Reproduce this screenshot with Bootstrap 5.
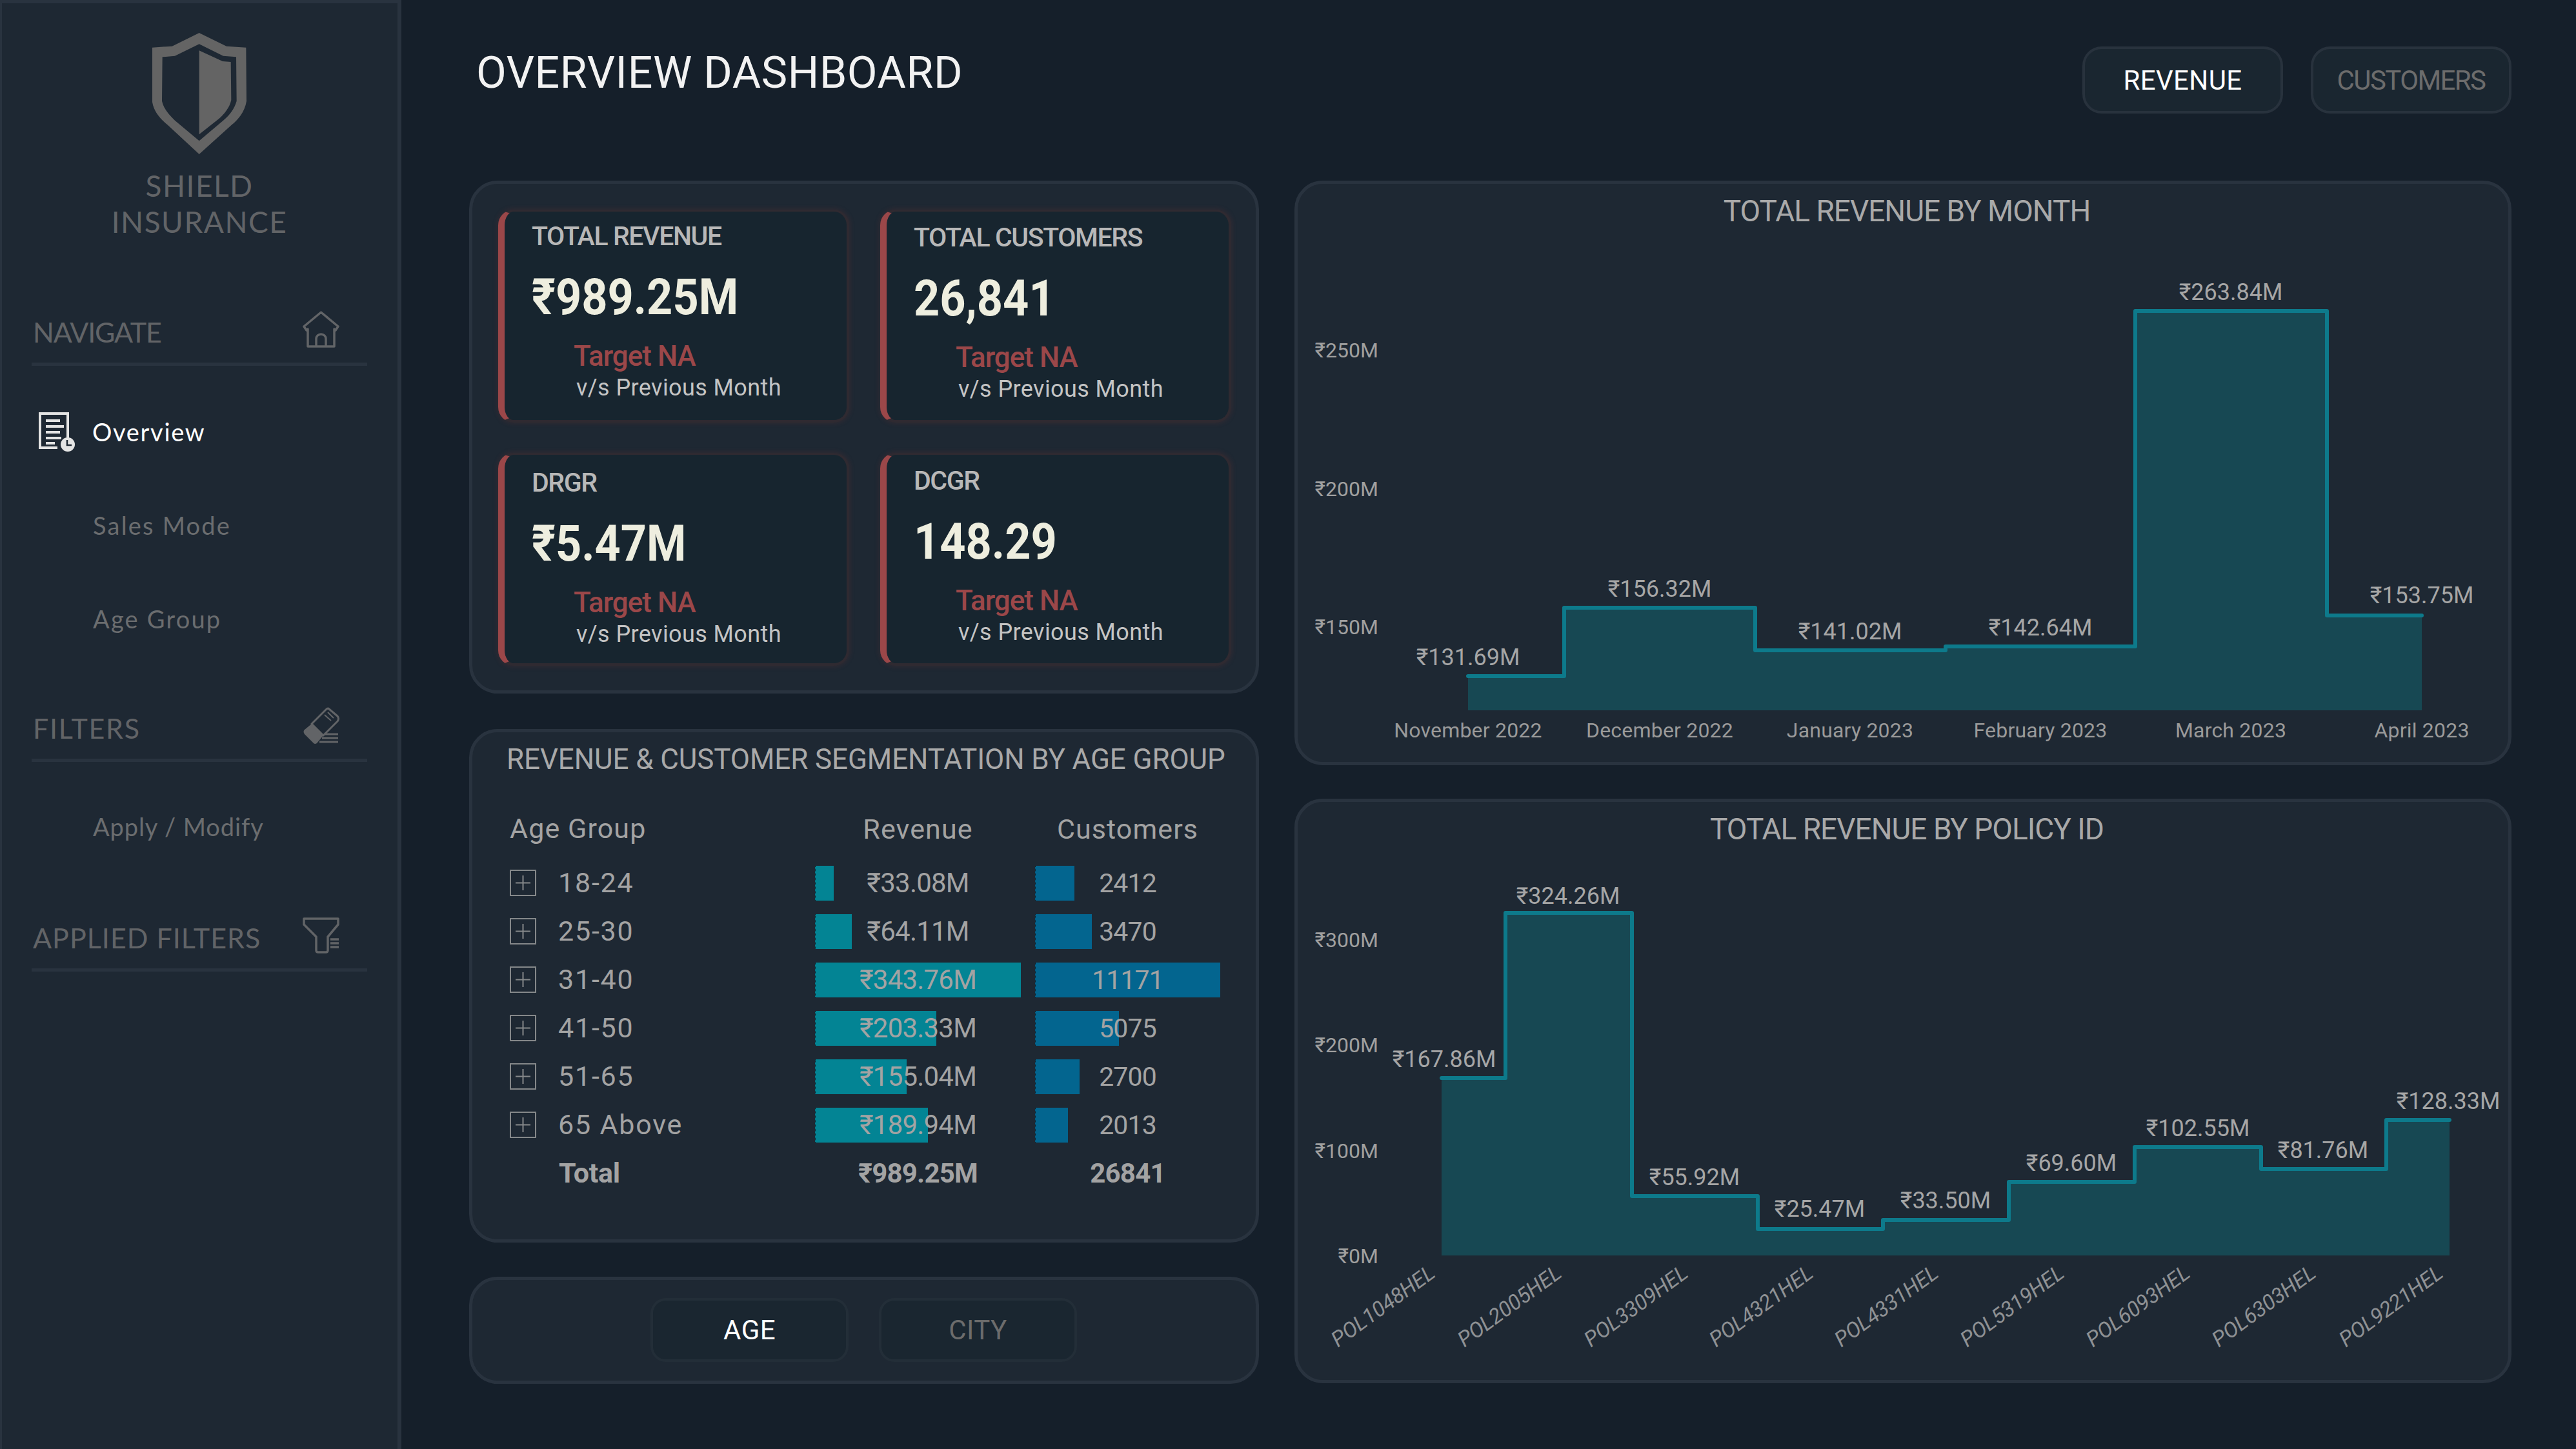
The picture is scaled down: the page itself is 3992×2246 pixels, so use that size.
<!DOCTYPE html>
<html lang="en">
<head>
<meta charset="utf-8">
<title>Overview Dashboard</title>
<link href="https://cdn.jsdelivr.net/npm/bootstrap@5.3.0/dist/css/bootstrap.min.css" rel="stylesheet">
<style>
html,body{width:3992px;height:2246px;overflow:hidden}
body{background:#151f2a;font-family:Roboto,"Noto Sans",sans-serif;color:#a9a9a9}
.shell{width:3992px;height:2246px}
.side{width:622px;height:2246px;flex:none;background:#1e2833;border-style:solid;border-color:#29333f;border-width:5px 6px 0 3px;padding-left:46px;font-family:Lato,"Open Sans",sans-serif;color:#626467}
.logo{width:520px}
.shield{width:146px;height:188px;margin-top:46px}
.brand{margin-top:21px;font-size:46px;line-height:56px;letter-spacing:1.5px;text-align:center;color:#626467}
.side-head{height:85px;border-bottom:5px solid #29333f;padding:0 43px 0 2px;align-items:flex-start}
.side-head span{font-size:43px;line-height:58px;margin-top:4px;letter-spacing:1px}
.head-nav span{letter-spacing:-1.2px}
.head-fil span{letter-spacing:1.7px}
.head-nav{margin-top:110px}.head-fil{margin-top:64px}.head-app{margin-top:67px}
.side-head svg{width:57px;height:58px}
.side-row{height:145px;padding-left:95px;font-size:38px;letter-spacing:2.2px;color:#6b6d6f}
.rows-a{margin-top:30px}.rows-b{margin-top:28px}
.rows-b .side-row{letter-spacing:.9px}
.side-row.on{color:#fff;padding-left:10px;gap:27px;letter-spacing:1.7px}
.side-row svg{width:57px;height:62px}
.main-area{padding:0 100px 0 105px;flex:1 1 auto}
.top-bar{height:280px;align-items:flex-start}
.page-title{font-size:68px;line-height:80px;margin:73px 0 0 11px;color:#f2f2f2;font-weight:400;letter-spacing:.6px}
.switches{margin-top:72px;gap:43px}
.tab-pill{width:311px;height:104px;border:4px solid #28323d;border-radius:30px;background:#1a2630;color:#6c6c6c;font-size:42px;letter-spacing:.4px}
.tab-pill.on{color:#fff}
.tab-narrow{letter-spacing:-1.6px}
.tab-small{width:307px;height:99px;border-radius:24px;border-color:#232e38}
.columns{gap:55px}
.left-col{width:1224px;flex:none}
.right-col{width:1886px;flex:none}
.panel-box{background:#1e2833;border:5px solid #29333f;border-radius:44px}
.kpi-panel{height:795px;padding:40px;display:grid;grid-template-columns:544px 544px;column-gap:48px;row-gap:47px;margin-bottom:55px}
.kpi-tile{height:330px;background:#17252f;border-style:solid;border-color:#2f2a31;border-width:3px 4px 4px 10px;border-left-color:#9b4749;border-radius:24px;box-shadow:0 0 7px 2px rgba(110,50,50,.22);padding:13px 0 0 42px}
.kpi-low{padding-top:18px}
.kpi-mid{padding-top:15px}
.kpi-name{font-size:41px;line-height:50px;font-weight:500;color:#b8b8b8;letter-spacing:-1.4px}
.kpi-num{font-weight:700;font-size:78px;line-height:90px;margin-top:25px;color:#eeeedf;transform:scaleX(.9);transform-origin:left center}
.kpi-tgt{font-size:44px;line-height:50px;font-weight:500;color:#9b4749;margin:21px 0 0 65px;letter-spacing:-1px}
.kpi-sub{font-size:36px;line-height:44px;color:#c4c4c4;margin:2px 0 0 69px;letter-spacing:.4px}
.seg-panel{height:796px;margin-bottom:53px;padding:0 0 0 58px}
.seg-title{font-size:44px;line-height:84px;margin-left:-5px;color:#a9a9a9;letter-spacing:-.1px;white-space:nowrap}
.seg-row{display:grid;grid-template-columns:473px 319px 22px 287px;height:75px;align-items:center;font-size:43px;letter-spacing:1.8px;color:#a3a3a3}
.seg-head{margin:28px 0 9px;height:75px;letter-spacing:1.1px}
.seg-total{font-weight:700}
.seg-name{display:flex;align-items:center}
.seg-name svg{width:41px;height:41px;margin-right:34px;flex:none}
.seg-gap{padding-left:76px;letter-spacing:-.3px}
.seg-cell{height:54px;line-height:54px;text-align:center;position:relative;white-space:nowrap}
.seg-row:not(.seg-head) .seg-cell{font-size:42px;letter-spacing:-.8px}
.seg-row:not(.seg-head) .fill-b{font-size:41px;letter-spacing:-.9px}
.seg-cell i{position:absolute;left:0;top:0;bottom:0;border-left:1px dotted #10202a}
.seg-cell b{position:relative;font-weight:inherit}
.fill-t i{background:#038494}.fill-b i{background:#03658f}
.toggle-panel{height:166px;gap:47px;padding:28px 0 0 276px;align-items:flex-start}
.chart-panel{height:906px}
.chart-panel + .chart-panel{margin-top:52px}
.chart-title{height:85px;line-height:84px;text-align:center;font-size:46px;color:#a9a9a9;letter-spacing:-1px;padding-left:12px}
.chart-svg{display:block;width:1876px;height:811px;overflow:visible}
.chart-svg .lv{font-size:36px;fill:#a6a6a6;text-anchor:middle}
.chart-svg .ay{font-size:32px;fill:#a0a0a0;text-anchor:end}
.chart-svg .ax{font-size:32px;fill:#9a9a9a;text-anchor:middle;letter-spacing:.2px}
.chart-svg .ar{font-size:33px;fill:#8e9194;text-anchor:end;font-style:italic;letter-spacing:-.1px}
.chart-svg .area{fill:#174853}
.chart-svg .line{fill:none;stroke:#0d7a8b;stroke-width:6;stroke-linejoin:round;stroke-linecap:round}
</style>
</head>
<body>
<div class="shell d-flex">
  <aside class="side">
    <div class="logo d-flex flex-column align-items-center">
      <svg class="shield d-block" viewBox="170 63 438 564" fill="#646464" aria-label="Shield logo">
        <path fill-rule="evenodd" d="M388 63 515 125 606 131 608 380C600 430 570 465 540 490L388 627 240 490C205 460 178 430 170 385L170 131 262 125ZM388 115 275 170 217 175 215 380C225 420 250 445 275 470L388 565 500 470C530 445 552 415 562 380L560 175 500 170Z"/>
        <path d="M388 145 497 195 535 198 537 375C530 410 505 440 480 462L388 535Z"/>
      </svg>
      <div class="brand">SHIELD<br>INSURANCE</div>
    </div>
    <div class="logo">
      <div class="side-head head-nav d-flex justify-content-between">
        <span>NAVIGATE</span>
        <svg viewBox="0 0 57 58" fill="none" stroke="#626467" stroke-width="3.500" stroke-linejoin="round"><path d="M2 24 28.500 2 55 24 51 30 49 28V55H8V28L6 30Z"/><path d="M21 55V43a7.500 7 0 0 1 15 0V55"/></svg>
      </div>
      <div class="rows-a">
        <div class="side-row on d-flex align-items-center">
          <svg viewBox="0 0 57 62" fill="none" stroke="#e4e4e4"><path stroke-width="4" d="M46 45V2H3V55H30"/><path stroke-width="4" d="M12 13H34M12 22H40M12 31H34M12 40H36M12 48H26" /><circle cx="46" cy="50" r="11" fill="#e4e4e4" stroke="none"/><path stroke="#1e2833" stroke-width="2.500" d="M45 43V51H52"/></svg>
          <span>Overview</span>
        </div>
        <div class="side-row d-flex align-items-center">Sales Mode</div>
        <div class="side-row d-flex align-items-center">Age Group</div>
      </div>
      <div class="side-head head-fil d-flex justify-content-between">
        <span>FILTERS</span>
        <svg viewBox="0 0 57 58" fill="none" stroke="#626467" stroke-width="3"><path stroke-linejoin="round" d="M41 3 54 14Q57 18 54 22L32 44 14 26 36 4Q39 1 41 3Z"/><path fill="#626467" stroke="none" d="M14 26 32 44 22 56Q19 58 17 56L3 42Q0 38 3 35Z"/><path d="M35 42H55M30 48H55M26 54H55"/><path stroke-width="2" d="M34 12 44 21M39 8 48 17"/></svg>
      </div>
      <div class="rows-b">
        <div class="side-row d-flex align-items-center">Apply / Modify</div>
      </div>
      <div class="side-head head-app d-flex justify-content-between">
        <span>APPLIED FILTERS</span>
        <svg viewBox="0 0 57 58" fill="none" stroke="#626467" stroke-width="3.500" stroke-linejoin="round"><path d="M2 3H55V12L39 31V52Q39 55 36 55H24Q21 55 21 52V31L2 12Z"/><path stroke-width="3.500" d="M43 35H56M43 41H56M43 47H56"/></svg>
      </div>
    </div>
  </aside>

  <main class="main-area">
    <div class="top-bar d-flex justify-content-between">
      <h1 class="page-title">OVERVIEW DASHBOARD</h1>
      <div class="switches d-flex">
        <div class="tab-pill on d-flex align-items-center justify-content-center">REVENUE</div>
        <div class="tab-pill tab-narrow d-flex align-items-center justify-content-center">CUSTOMERS</div>
      </div>
    </div>
    <div class="columns d-flex">
      <div class="left-col">
        <section class="panel-box kpi-panel">
          <div class="kpi-tile"><div class="kpi-name">TOTAL REVENUE</div><div class="kpi-num">₹989.25M</div><div class="kpi-tgt">Target NA</div><div class="kpi-sub">v/s Previous Month</div></div>
          <div class="kpi-tile kpi-mid"><div class="kpi-name">TOTAL CUSTOMERS</div><div class="kpi-num">26,841</div><div class="kpi-tgt">Target NA</div><div class="kpi-sub">v/s Previous Month</div></div>
          <div class="kpi-tile kpi-low"><div class="kpi-name">DRGR</div><div class="kpi-num">₹5.47M</div><div class="kpi-tgt">Target NA</div><div class="kpi-sub">v/s Previous Month</div></div>
          <div class="kpi-tile kpi-mid"><div class="kpi-name">DCGR</div><div class="kpi-num">148.29</div><div class="kpi-tgt">Target NA</div><div class="kpi-sub">v/s Previous Month</div></div>
        </section>
        <section class="panel-box seg-panel">
          <div class="seg-title">REVENUE &amp; CUSTOMER SEGMENTATION BY AGE GROUP</div>
          <div class="seg-row seg-head"><div>Age Group</div><div class="seg-cell">Revenue</div><div></div><div class="seg-cell">Customers</div></div>
          <div class="seg-row"><div class="seg-name"><svg viewBox="0 0 41 41" fill="none" stroke="#85888a" stroke-width="2"><rect x="1" y="1" width="39" height="39"/><path d="M20.500 9V32M9 20.500H32"/></svg>18-24</div><div class="seg-cell fill-t"><i style="width:29px"></i><b>₹33.08M</b></div><div></div><div class="seg-cell fill-b"><i style="width:61px"></i><b>2412</b></div></div>
          <div class="seg-row"><div class="seg-name"><svg viewBox="0 0 41 41" fill="none" stroke="#85888a" stroke-width="2"><rect x="1" y="1" width="39" height="39"/><path d="M20.500 9V32M9 20.500H32"/></svg>25-30</div><div class="seg-cell fill-t"><i style="width:57px"></i><b>₹64.11M</b></div><div></div><div class="seg-cell fill-b"><i style="width:88px"></i><b>3470</b></div></div>
          <div class="seg-row"><div class="seg-name"><svg viewBox="0 0 41 41" fill="none" stroke="#85888a" stroke-width="2"><rect x="1" y="1" width="39" height="39"/><path d="M20.500 9V32M9 20.500H32"/></svg>31-40</div><div class="seg-cell fill-t"><i style="width:319px"></i><b>₹343.76M</b></div><div></div><div class="seg-cell fill-b"><i style="width:287px"></i><b>11171</b></div></div>
          <div class="seg-row"><div class="seg-name"><svg viewBox="0 0 41 41" fill="none" stroke="#85888a" stroke-width="2"><rect x="1" y="1" width="39" height="39"/><path d="M20.500 9V32M9 20.500H32"/></svg>41-50</div><div class="seg-cell fill-t"><i style="width:188px"></i><b>₹203.33M</b></div><div></div><div class="seg-cell fill-b"><i style="width:130px"></i><b>5075</b></div></div>
          <div class="seg-row"><div class="seg-name"><svg viewBox="0 0 41 41" fill="none" stroke="#85888a" stroke-width="2"><rect x="1" y="1" width="39" height="39"/><path d="M20.500 9V32M9 20.500H32"/></svg>51-65</div><div class="seg-cell fill-t"><i style="width:142px"></i><b>₹155.04M</b></div><div></div><div class="seg-cell fill-b"><i style="width:69px"></i><b>2700</b></div></div>
          <div class="seg-row"><div class="seg-name"><svg viewBox="0 0 41 41" fill="none" stroke="#85888a" stroke-width="2"><rect x="1" y="1" width="39" height="39"/><path d="M20.500 9V32M9 20.500H32"/></svg>65 Above</div><div class="seg-cell fill-t"><i style="width:175px"></i><b>₹189.94M</b></div><div></div><div class="seg-cell fill-b"><i style="width:51px"></i><b>2013</b></div></div>
          <div class="seg-row seg-total"><div class="seg-gap">Total</div><div class="seg-cell">₹989.25M</div><div></div><div class="seg-cell">26841</div></div>
        </section>
        <section class="panel-box toggle-panel d-flex">
          <div class="tab-pill tab-small on d-flex align-items-center justify-content-center">AGE</div>
          <div class="tab-pill tab-small d-flex align-items-center justify-content-center">CITY</div>
        </section>
      </div>
      <div class="right-col">
        <section class="panel-box chart-panel">
          <div class="chart-title">TOTAL REVENUE BY MONTH</div>
          <svg class="chart-svg" viewBox="2011 370 1876 811">
            <path class="area" d="M2275 1048H2424V942H2720V1008H3015V1002H3309V482H3606V954H3753V1101H2275Z"/>
            <path class="line" d="M2275 1048H2424V942H2720V1008H3015V1002H3309V482H3606V954H3753"/>
            <text class="ay" x="2136" y="554">₹250M</text><text class="ay" x="2136" y="769">₹200M</text><text class="ay" x="2136" y="983">₹150M</text>
            <text class="lv" x="2275" y="1031">₹131.69M</text><text class="lv" x="2572" y="925">₹156.32M</text><text class="lv" x="2867" y="991">₹141.02M</text><text class="lv" x="3162" y="985">₹142.64M</text><text class="lv" x="3457" y="465">₹263.84M</text><text class="lv" x="3753" y="935">₹153.75M</text>
            <text class="ax" x="2275" y="1143">November 2022</text><text class="ax" x="2572" y="1143">December 2022</text><text class="ax" x="2867" y="1143">January 2023</text><text class="ax" x="3162" y="1143">February 2023</text><text class="ax" x="3457" y="1143">March 2023</text><text class="ax" x="3753" y="1143">April 2023</text>
          </svg>
        </section>
        <section class="panel-box chart-panel">
          <div class="chart-title">TOTAL REVENUE BY POLICY ID</div>
          <svg class="chart-svg" viewBox="2011 1328 1876 811">
            <path class="area" d="M2234 1671H2333V1415H2529V1854H2724V1905H2918V1891H3113V1832H3308V1778H3504V1812H3698V1736H3796V1946H2234Z"/>
            <path class="line" d="M2234 1671H2333V1415H2529V1854H2724V1905H2918V1891H3113V1832H3308V1778H3504V1812H3698V1736H3796"/>
            <text class="ay" x="2136" y="1468">₹300M</text><text class="ay" x="2136" y="1631">₹200M</text><text class="ay" x="2136" y="1795">₹100M</text><text class="ay" x="2136" y="1958">₹0M</text>
            <text class="lv" x="2238" y="1654">₹167.86M</text><text class="lv" x="2430" y="1401">₹324.26M</text><text class="lv" x="2626" y="1837">₹55.92M</text><text class="lv" x="2820" y="1886">₹25.47M</text><text class="lv" x="3015" y="1873">₹33.50M</text><text class="lv" x="3210" y="1815">₹69.60M</text><text class="lv" x="3406" y="1761">₹102.55M</text><text class="lv" x="3600" y="1795">₹81.76M</text><text class="lv" x="3794" y="1719">₹128.33M</text>
            <text class="ar" transform="translate(2226 1978) rotate(-36)">POL1048HEL</text><text class="ar" transform="translate(2422 1978) rotate(-36)">POL2005HEL</text><text class="ar" transform="translate(2618 1978) rotate(-36)">POL3309HEL</text><text class="ar" transform="translate(2812 1978) rotate(-36)">POL4321HEL</text><text class="ar" transform="translate(3006 1978) rotate(-36)">POL4331HEL</text><text class="ar" transform="translate(3201 1978) rotate(-36)">POL5319HEL</text><text class="ar" transform="translate(3396 1978) rotate(-36)">POL6093HEL</text><text class="ar" transform="translate(3591 1978) rotate(-36)">POL6303HEL</text><text class="ar" transform="translate(3788 1978) rotate(-36)">POL9221HEL</text>
          </svg>
        </section>
      </div>
    </div>
  </main>
</div>
<script src="https://cdn.jsdelivr.net/npm/bootstrap@5.3.0/dist/js/bootstrap.bundle.min.js"></script>
</body>
</html>
